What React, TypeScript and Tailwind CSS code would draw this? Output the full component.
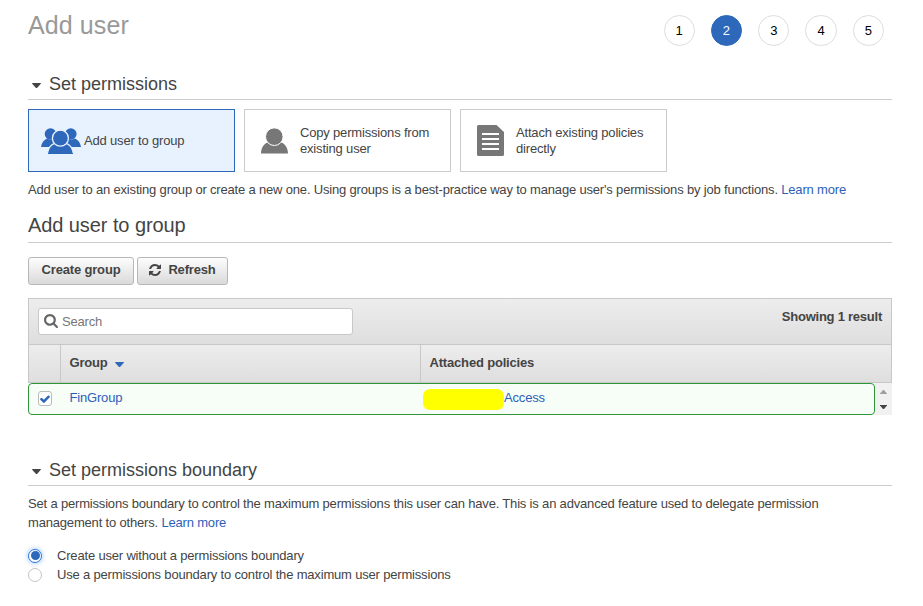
import type { ReactNode } from "react";

const steps = [1, 2, 3, 4, 5];

function Caret({ className, fill = "#444" }: { className?: string; fill?: string }) {
  return (
    <svg width="9" height="5" viewBox="0 0 9 5" className={className}>
      <path d="M0.200 0h8.600v.7L5 5H4L.2.7z" fill={fill} />
    </svg>
  );
}

function ScrollArrow({ className, fill }: { className?: string; fill: string }) {
  return (
    <svg width="7" height="4" viewBox="0 0 7 4" className={className}>
      <path d="M0 0h7v.6L4 4H3L0 .6z" fill={fill} />
    </svg>
  );
}

function UsersIcon() {
  return (
    <svg width="40" height="26" viewBox="0 0 40 26" className="shrink-0" fill="#2d68bb">
      <circle cx="9.500" cy="6" r="5.800" />
      <circle cx="29.800" cy="6" r="5.800" />
      <path d="M0 19c.6-4 2.600-7 6-8.500 2.500 1.500 5 1.500 7.500 0l2 8.500zM40 19c-.6-4-2.600-7-6-8.500-2.500 1.500-5 1.500-7.500 0l-2 8.500z" />
      <path
        d="M6.400 26.700c.4-5.500 2.800-9.700 7-11.400 3.500 2.600 8.500 2.600 12 0 4.200 1.700 6.600 5.900 7 11.400z"
        stroke="#e8f2ff"
        strokeWidth="1.300"
      />
      <path d="M7 25h25v1H7z" />
      <circle cx="19.400" cy="10.200" r="8" stroke="#e8f2ff" strokeWidth="1.300" />
    </svg>
  );
}

function UserIcon() {
  return (
    <svg width="28" height="26" viewBox="0 0 28 26" className="shrink-0" fill="#777">
      <path d="M0 25.500c.2-5.500 2.300-9.300 7-11.200 4.300 2.900 8.700 2.900 13 0 4.500 1.900 6.800 5.700 7 11.200z" />
      <circle cx="13.300" cy="8.700" r="8.800" stroke="#fff" strokeWidth="1" />
    </svg>
  );
}

function DocIcon() {
  return (
    <svg width="27" height="31" viewBox="0 0 27 31" className="shrink-0">
      <path d="M1.500 0H19.500l7.500 7v22.500a1.500 1.500 0 0 1-1.500 1.500h-24A1.500 1.500 0 0 1 0 29.500v-28A1.500 1.500 0 0 1 1.500 0z" fill="#777" />
      <path d="M5 9h17M5 14h17M5 19h17M5 24h17" stroke="#fff" strokeWidth="2" />
    </svg>
  );
}

function SectionTitle({ children }: { children: ReactNode }) {
  return (
    <div className="flex h-[29px] items-start border-b border-[#ccc] pl-1 text-[18px] leading-[27px] tracking-normal">
      <Caret className="mr-[8px] mt-[12px]" />
      <h2>{children}</h2>
    </div>
  );
}

function Link({ children }: { children: ReactNode }) {
  return <a className="text-[#2d5fb8]">{children}</a>;
}

const button =
  "flex h-[28px] items-center justify-center rounded-[3px] border border-[#b7b7b7] bg-linear-to-b from-[#fdfdfd] to-[#dadada] pb-[2px] font-bold tracking-[-0.17px]";

export default function App() {
  return (
    <main className="h-[606px] w-[923px] overflow-hidden bg-white pl-[28px] pr-[31px] font-['Liberation_Sans',Arial,sans-serif] text-[13px] leading-[16px] tracking-[-0.178px] text-[#444]">
      <header className="flex h-[71px] items-start justify-between">
        <h1 className="pt-[9px] text-[25px] leading-[32px] tracking-[0.1px] text-[#999]">Add user</h1>
        <ol className="flex gap-[16px] pr-[8px] pt-[15px] tracking-normal text-black">
          {steps.map((n) => (
            <li
              key={n}
              className={
                n === 2
                  ? "flex size-[31.300px] items-center justify-center rounded-full border border-[#2d68bb] bg-[#2d68bb] text-white"
                  : "flex size-[31.300px] items-center justify-center rounded-full border border-[#ddd]"
              }
            >
              {n}
            </li>
          ))}
        </ol>
      </header>

      <SectionTitle>Set permissions</SectionTitle>

      <div className="mt-[9px] flex gap-[9px]">
        <div className="flex h-[63px] w-[207px] items-center border border-[#2d68bb] bg-[#e8f2ff] pl-[12px]">
          <UsersIcon />
          <span className="ml-[3px]">Add user to group</span>
        </div>
        <div className="flex h-[63px] w-[207px] items-center border border-[#ccc] pl-[16px]">
          <UserIcon />
          <span className="ml-[11px]">
            Copy permissions from
            <br />
            existing user
          </span>
        </div>
        <div className="flex h-[63px] w-[207px] items-center border border-[#ccc] pl-[16px]">
          <DocIcon />
          <span className="ml-[12px]">
            Attach existing policies
            <br />
            directly
          </span>
        </div>
      </div>

      <p className="mt-[10px] whitespace-nowrap">
        Add user to an existing group or create a new one. Using groups is a best-practice way to manage user's
        permissions by job functions. <Link>Learn more</Link>
      </p>

      <h2 className="mt-[14px] h-[31px] border-b border-[#ccc] text-[20px] leading-[26px] tracking-[-0.08px]">
        Add user to group
      </h2>

      <div className="mt-[14px] flex gap-[3px]">
        <button className={`${button} w-[106px]`}>Create group</button>
        <button className={`${button} w-[91px]`}>
          <svg width="12" height="12" viewBox="0 0 1536 1536" className="mr-[7px]" fill="#444">
            <path d="M1511 928q0 5-1 7-64 268-268 434.500t-478 166.500q-146 0-282.500-55t-243.500-157l-129 129q-19 19-45 19t-45-19-19-45v-448q0-26 19-45t45-19h448q26 0 45 19t19 45-19 45l-137 137q71 66 161 102t187 36q134 0 250-65t186-179q11-17 53-117 8-23 30-23h192q13 0 22.500 9.500t9.500 22.500zm25-800v448q0 26-19 45t-45 19h-448q-26 0-45-19t-19-45 19-45l138-138q-148-137-349-137-134 0-250 65t-186 179q-11 17-53 117-8 23-30 23h-199q-13 0-22.500-9.500t-9.500-22.500v-7q65-268 270-434.500t480-166.500q146 0 284 55.500t245 156.500l130-129q19-19 45-19t45 19 19 45z" />
          </svg>
          Refresh
        </button>
      </div>

      <section className="mt-[13px]">
        <div className="flex h-[46px] items-start justify-between border border-b-0 border-[#c8c8c8] bg-linear-to-b from-[#ededed] to-[#dedede] pl-[9px] pr-[9px] pt-[9px]">
          <div className="flex h-[27px] w-[315px] items-center rounded-[3px] border border-[#c8c8c8] bg-white pl-[5px] text-[#777]">
            <svg width="14" height="14" viewBox="64 128 1664 1664" className="mb-[2px] mr-[4px]" fill="#666">
              <path d="M1216 832q0-185-131.500-316.500t-316.500-131.500-316.500 131.500-131.500 316.500 131.500 316.500 316.500 131.500 316.500-131.500 131.500-316.500zm512 832q0 52-38 90t-90 38q-54 0-90-38l-343-342q-179 124-399 124-143 0-273.500-55.500t-225-150-150-225-55.500-273.500 55.500-273.500 150-225 225-150 273.500-55.500 273.500 55.500 225 150 150 225 55.500 273.500q0 220-124 399l343 343q37 37 37 90z" />
            </svg>
            Search
          </div>
          <span className="pt-px font-bold tracking-[-0.24px]">Showing 1 result</span>
        </div>
        <div className="flex h-[39px] border border-[#c8c8c8] bg-linear-to-b from-[#ededed] to-[#dedede] font-bold">
          <div className="w-[32px] border-r border-[#c8c8c8]" />
          <div className="flex w-[360px] items-center border-r border-[#c8c8c8] pb-[2px] pl-[8.500px]">
            Group
            <Caret className="ml-[7.500px] mt-[3px]" fill="#2d68bb" />
          </div>
          <div className="flex items-center pb-[2px] pl-[8.500px]">Attached policies</div>
        </div>
        <div className="flex h-[32px] bg-[#f1f1f1]">
          <div className="w-[847px] bg-white">
            <div className="flex h-[32px] rounded-[4px] border border-[#2f9637] bg-[#f7fdf7]">
              <div className="ml-[9px] mt-[7px] flex h-[15px] w-[14px] items-center justify-center rounded-[3px] border border-[#bbb] bg-white">
                <svg width="10" height="8" viewBox="121 270 1550 1252" className="shrink-0" fill="#2d68bb">
                  <path d="M1671 566q0 40-28 68l-724 724-136 136q-28 28-68 28t-68-28l-136-136-362-362q-28-28-28-68t28-68l136-136q28-28 68-28t68 28l294 295 656-657q28-28 68-28t68 28l136 136q28 28 28 68z" />
                </svg>
              </div>
              <div className="ml-[17px] w-[354px] pl-[0.500px] pt-[6px]">
                <Link>FinGroup</Link>
              </div>
              <div className="mt-[5px] h-[21px] w-[81px] rounded-[7px] bg-[#ff0]" />
              <div className="pt-[6px]">
                <Link>Access</Link>
              </div>
            </div>
          </div>
          <div className="flex w-[17px] flex-col items-center gap-[11px] pt-[7px]">
            <ScrollArrow className="rotate-180" fill="#a0a0a0" />
            <ScrollArrow fill="#444" />
          </div>
        </div>
      </section>

      <div className="mt-[42px]">
        <SectionTitle>Set permissions boundary</SectionTitle>
      </div>
      <p className="mt-[8px] whitespace-nowrap leading-[19px]">
        Set a permissions boundary to control the maximum permissions this user can have. This is an advanced feature
        used to delegate permission
        <br />
        management to others. <Link>Learn more</Link>
      </p>

      <div className="mt-[14px] leading-[19px]">
        <label className="flex items-center">
          <span className="mr-[15px] flex size-[14px] items-center justify-center rounded-full border border-[#2d77d8] bg-white shadow-[0_0_4px_1px_#b5d3ff]">
            <span className="size-[9px] shrink-0 rounded-full bg-[#2d68bb]" />
          </span>
          Create user without a permissions boundary
        </label>
        <label className="flex items-center">
          <span className="mr-[15px] size-[14px] rounded-full border border-[#c4c4c4] bg-white" />
          Use a permissions boundary to control the maximum user permissions
        </label>
      </div>
    </main>
  );
}
